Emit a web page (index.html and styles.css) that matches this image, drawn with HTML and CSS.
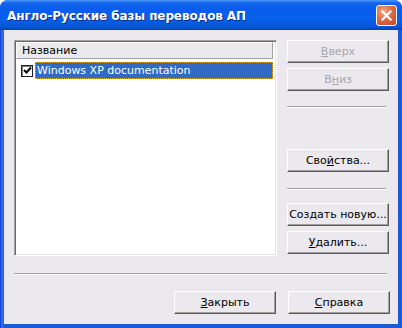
FILE: index.html
```html
<!DOCTYPE html>
<html lang="ru">
<head>
  <meta charset="UTF-8" />
  <title>Англо-Русские базы переводов АП</title>
  <link rel="stylesheet" href="styles.css">
</head>
<body>
  <div class="window">
    <div class="titlebar">
      <span class="title">Англо-Русские базы переводов АП</span>
      <button class="close" aria-label="Закрыть">
        <svg width="11" height="11" viewBox="0 0 11 11">
          <path d="M1.5 1.5 L9.5 9.5 M9.5 1.5 L1.5 9.5" stroke="#fff" stroke-width="2.2" stroke-linecap="square" />
        </svg>
      </button>
    </div>

    <div class="client">
      <div class="main">
        <div class="list">
          <div class="list-header">
            <div class="col">Название</div>
          </div>
          <div class="row">
            <span class="check">
              <svg width="9" height="9" viewBox="0 0 9 9">
                <path d="M1 4 L3.5 6.5 L8 1.5" stroke="#000" stroke-width="2" fill="none" />
              </svg>
            </span>
            <span class="row-text">Windows XP documentation</span>
          </div>
        </div>

        <div class="side">
          <button class="btn" disabled><u>В</u>верх</button>
          <button class="btn gap-s" disabled>В<u>н</u>из</button>
          <div class="sep sep-1"></div>
          <button class="btn">Сво<u>й</u>ства...</button>
          <div class="sep sep-2"></div>
          <button class="btn">Соз<u>д</u>ать новую...</button>
          <button class="btn gap-s"><u>У</u>далить...</button>
        </div>
      </div>

      <div class="sep sep-bottom"></div>

      <div class="footer">
        <button class="btn"><u>З</u>акрыть</button>
        <button class="btn"><u>С</u>правка</button>
      </div>
    </div>
  </div>
</body>
</html>
```

FILE: styles.css
```css
* { box-sizing: border-box; }
body {
  margin: 0;
  background: #fff;
  font-family: 'DejaVu Sans', 'Liberation Sans', sans-serif;
  font-size: 11px;
}
.window {
  width: 402px;
  height: 328px;
  display: flex;
  flex-direction: column;
  background: linear-gradient(to right, #0831d9 0, #3b78e6 2px, #1c5bd8 4px);
  border-radius: 8px 8px 0 0;
  overflow: hidden;
}
.titlebar {
  height: 30px;
  flex-shrink: 0;
  display: flex;
  align-items: center;
  justify-content: space-between;
  padding: 0 5px 0 7px;
  background: linear-gradient(to bottom, #4a96fa 0, #1466ec 3px, #0a5ded 8px, #0660ea 20px, #0a52d6 27px, #0040c0 30px);
}
.title {
  color: #fff;
  font-weight: bold;
  font-size: 12px;
  letter-spacing: -0.1px;
  text-shadow: 1px 1px 0 #0b2b8a;
  margin-top: 1px;
}
.close {
  width: 21px;
  height: 21px;
  margin-top: 1px;
  padding: 0;
  border: 1px solid #fff;
  border-radius: 3px;
  background: radial-gradient(circle at 35% 30%, #f3a88a 0, #e06a45 45%, #c44522 100%);
  display: flex;
  align-items: center;
  justify-content: center;
}
.client {
  flex: 1;
  margin: 0 4px 4px 4px;
  background: #ebe9ed;
  padding: 10px 0 0 10px;
  display: flex;
  flex-direction: column;
}
.main {
  display: flex;
  height: 216px;
}
.list {
  width: 263px;
  height: 216px;
  background: #fff;
  border-top: 1px solid #a0a0a0;
  border-left: 1px solid #a0a0a0;
  border-right: 1px solid #fff;
  border-bottom: 1px solid #fff;
  box-shadow: inset 1px 1px 0 #696969, inset -1px -1px 0 #e3e3e3;
  padding: 1px 3px 0 1px;
}
.list-header {
  height: 17px;
  display: flex;
  background: #ebe9ed;
  border-top: 1px solid #fff;
  border-left: 1px solid #fff;
  border-bottom: 1px solid #a0a0a0;
  border-right: 1px solid #a0a0a0;
}
.col {
  padding: 1px 0 0 5px;
  color: #000;
}
.row {
  display: flex;
  align-items: center;
  height: 17px;
  margin-top: 3px;
  padding-left: 4px;
}
.check {
  width: 12px;
  height: 12px;
  border: 1px solid #1c1c1c;
  box-shadow: inset 1px 1px 0 #808080;
  background: #fff;
  display: flex;
  align-items: center;
  justify-content: center;
  margin-right: 2px;
  margin-left: 1px;
}
.row-text {
  flex: 1;
  height: 17px;
  line-height: 15px;
  color: #fff;
  background: #316ac5;
  border: 1px dotted #e6b23a;
  padding-left: 1px;
}
.side {
  display: flex;
  flex-direction: column;
  margin-left: 10px;
  width: 102px;
}
.btn {
  width: 102px;
  height: 23px;
  padding: 0;
  font-family: 'DejaVu Sans', 'Liberation Sans', sans-serif;
  font-size: 11px;
  color: #000;
  background: #ebe9ed;
  border-top: 1px solid #fff;
  border-left: 1px solid #fff;
  border-right: 1px solid #5a5a5a;
  border-bottom: 1px solid #5a5a5a;
  box-shadow: inset -1px -1px 0 #a0a0a0;
}
.btn:disabled { color: #a7a6aa; }
.gap-s { margin-top: 5px; }
.sep {
  height: 2px;
  border-top: 1px solid #a0a0a0;
  border-bottom: 1px solid #fff;
}
.sep-1 { margin: 15px 3px 41px 0; }
.sep-2 { margin: 16px 3px 13px 0; }
.sep-bottom { margin: 17px 11px 0 0; }
.footer {
  display: flex;
  justify-content: flex-end;
  gap: 12px;
  margin: 16px 8px 0 0;
}
```
